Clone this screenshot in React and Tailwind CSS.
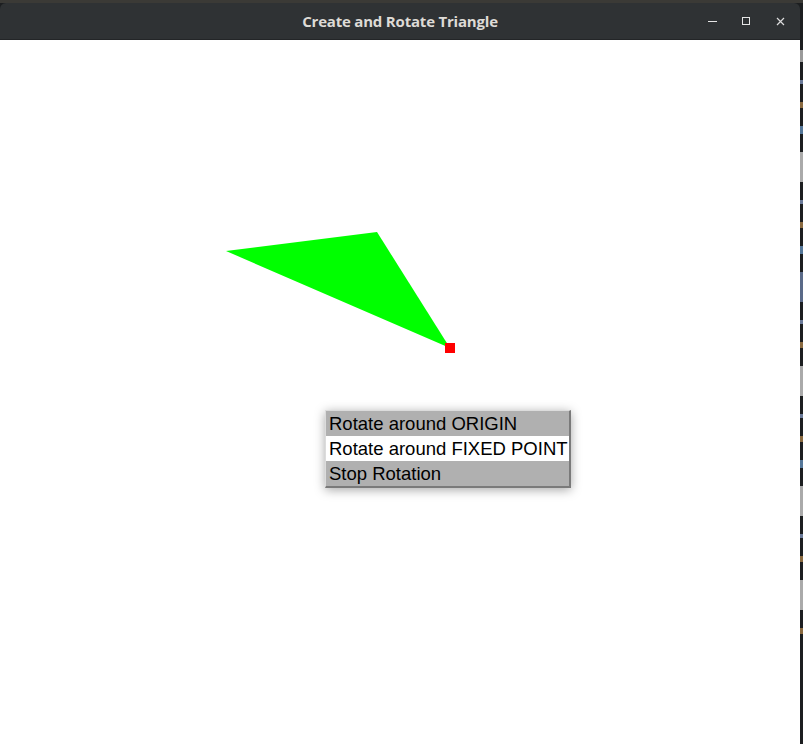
export default function App() {
  return (
    <div className="relative w-[803px] h-[744px] bg-[#1c1e20] overflow-hidden">
      <div className="h-[3px] bg-[#3b3a36]" />
      {/* right desktop strip */}
      <div className="absolute right-0 top-[40px] w-[3px] h-[704px] flex flex-col gap-[18px] pt-[10px]">
        <div className="h-[12px] bg-[#9a9a9a]" />
        <div className="h-[4px] bg-[#6b7a99]" />
        <div className="h-[6px] bg-[#8a6a40]" />
        <div className="h-[8px] bg-[#557799]" />
        <div className="h-[30px] bg-[#aaaaaa]" />
        <div className="h-[4px] bg-[#6b7a99]" />
        <div className="h-[6px] bg-[#8a6a40]" />
        <div className="h-[8px] bg-[#557799]" />
        <div className="h-[30px] bg-[#5a6a88]" />
        <div className="h-[4px] bg-[#6b7a99]" />
        <div className="h-[6px] bg-[#8a6a40]" />
        <div className="h-[30px] bg-[#aaaaaa]" />
        <div className="h-[4px] bg-[#6b7a99]" />
        <div className="h-[6px] bg-[#8a6a40]" />
        <div className="h-[8px] bg-[#557799]" />
        <div className="h-[30px] bg-[#aaaaaa]" />
        <div className="h-[4px] bg-[#6b7a99]" />
        <div className="h-[6px] bg-[#8a6a40]" />
        <div className="h-[30px] bg-[#aaaaaa]" />
        <div className="h-[6px] bg-[#8a6a40]" />
      </div>
      <div className="w-[800px] flex flex-col">
        <div className="relative h-[37px] bg-[#2f3234] rounded-t-[6px] flex items-center justify-center border-b border-[#232527]">
          <span className="text-[15px] font-bold text-[#dedbd6] tracking-[-0.2px]" style={{ fontFamily: '"Open Sans", "DejaVu Sans", sans-serif' }}>
            Create and Rotate Triangle
          </span>
          <div className="absolute right-[14px] top-0 h-full flex items-center gap-[22px]">
            <div className="w-[12px] h-[12px] flex items-center justify-center">
              <div className="w-[9px] h-[1px] bg-[#e6e6e6]" />
            </div>
            <div className="w-[12px] h-[12px] flex items-center justify-center">
              <div className="w-[8px] h-[8px] border border-[#e6e6e6]" />
            </div>
            <div className="w-[12px] h-[12px] flex items-center justify-center">
              <svg width="9" height="9" viewBox="0 0 9 9">
                <path d="M1 1 L8 8 M8 1 L1 8" stroke="#dcdcdc" strokeWidth="1.2" />
              </svg>
            </div>
          </div>
        </div>
        <div className="relative h-[704px] bg-white">
          <svg className="absolute left-0 top-0" width="800" height="704" viewBox="0 40 800 704">
            <polygon points="226,251 377,232 450,348" fill="#00ff00" />
            <rect x="445" y="343" width="10" height="10" fill="#ff0000" />
          </svg>
          <div
            className="absolute left-[325px] top-[370px] w-[246px] flex flex-col border-t border-l border-t-[#dcdcdc] border-l-[#dcdcdc] border-b-2 border-r-2 border-b-[#7a7a7a] border-r-[#7a7a7a] shadow-[0_2px_10px_rgba(0,0,0,0.35)] text-[18.5px] text-black leading-[25px]"
            style={{ fontFamily: '"Liberation Sans", Arial, sans-serif' }}
          >
            <div className="h-[25px] bg-[#b0b0b0] pl-[3px] flex items-center">Rotate around ORIGIN</div>
            <div className="h-[25px] bg-white pl-[3px] flex items-center">Rotate around FIXED POINT</div>
            <div className="h-[25px] bg-[#b0b0b0] pl-[3px] flex items-center">Stop Rotation</div>
          </div>
        </div>
      </div>
    </div>
  );
}
